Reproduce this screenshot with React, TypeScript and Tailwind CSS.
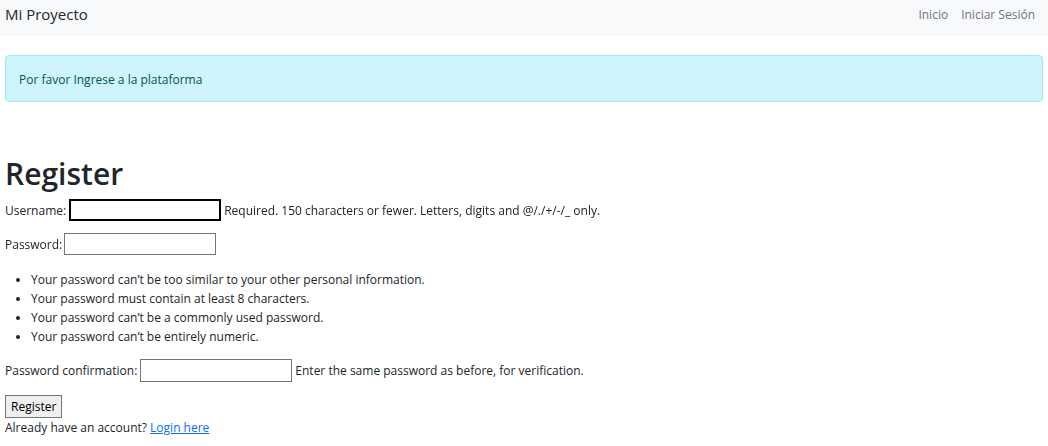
export default function App() {
  return (
    <div className="min-h-screen w-full bg-white font-['Open_Sans',sans-serif] text-[12px] leading-[19px] text-[#212529]">
      {/* Navbar */}
      <nav className="flex h-[36px] items-start justify-between bg-[#f8f9fa] px-[5px]">
        <a className="pt-[4px] text-[15px] leading-[20px] text-[#212529]">Mi Proyecto</a>
        <div className="flex gap-[13px] pt-[5px] pr-[8px] text-[12px] text-[#6c757d]">
          <a>Inicio</a>
          <a>Iniciar Sesión</a>
        </div>
      </nav>

      <div className="px-[5px]">
        {/* Alert */}
        <div className="mt-[19px] rounded-[4px] border border-[#9eeaf9] bg-[#cff4fc] px-[13px] pt-[14px] pb-[12px] leading-[19px] text-[#055160]">
          Por favor Ingrese a la plataforma
        </div>

        <h1 className="mt-[53px] text-[30px] leading-[38px] font-semibold">Register</h1>

        <form className="mt-[6px]">
          <p className="flex items-center">
            <label>Username:</label>
            <input
              autoFocus
              className="mx-[3px] h-[22px] w-[152px] border-2 border-black bg-white outline-none"
            />
            <span>Required. 150 characters or fewer. Letters, digits and @/./+/-/_ only.</span>
          </p>

          <p className="mt-[12px] flex items-center">
            <label>Password:</label>
            <input type="password" className="ml-[2px] h-[22px] w-[152px] border border-[#767676] bg-white outline-none" />
          </p>

          <ul className="mt-[15px] list-disc pl-[26px]">
            <li>Your password can’t be too similar to your other personal information.</li>
            <li>Your password must contain at least 8 characters.</li>
            <li>Your password can’t be a commonly used password.</li>
            <li>Your password can’t be entirely numeric.</li>
          </ul>

          <p className="mt-[13px] flex items-center">
            <label>Password confirmation:</label>
            <input type="password" className="mx-[3px] h-[23px] w-[152px] border border-[#767676] bg-white outline-none" />
            <span>Enter the same password as before, for verification.</span>
          </p>

          <button
            type="button"
            className="mt-[13px] h-[23px] border border-[#767676] bg-[#efefef] px-[5px] text-[12px] leading-[19px] text-black"
          >
            Register
          </button>
        </form>

        <p className="leading-[19px]">
          Already have an account?{" "}
          <a href="#" className="text-[#0d6efd] underline">
            Login here
          </a>
        </p>
      </div>
    </div>
  );
}
